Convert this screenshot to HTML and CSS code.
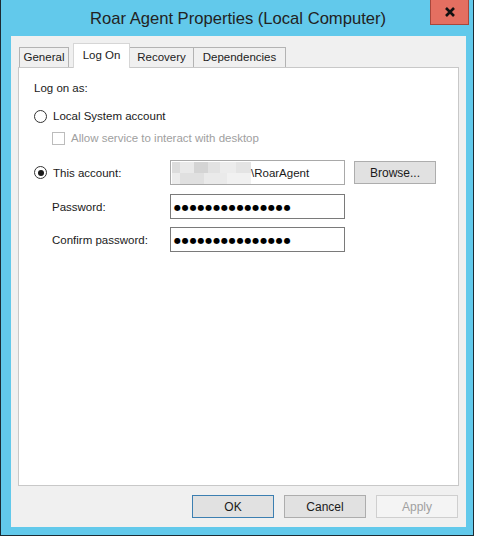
FILE: index.html
```html
<!DOCTYPE html>
<html lang="en">
<head>
  <meta charset="UTF-8">
  <title>Roar Agent Properties (Local Computer)</title>
  <link rel="stylesheet" href="styles.css">
</head>
<body>
  <div class="window">
    <div class="titlebar">
      <span class="title">Roar Agent Properties (Local Computer)</span>
      <div class="close">
        <svg width="12" height="10" viewBox="0 0 12 10">
          <path d="M2 1 L10 9 M10 1 L2 9" stroke="#111" stroke-width="2.6" fill="none"/>
        </svg>
      </div>
    </div>

    <div class="client">
      <div class="tabs">
        <div class="tab tab-general">General</div>
        <div class="tab tab-logon active">Log On</div>
        <div class="tab tab-recovery">Recovery</div>
        <div class="tab tab-deps">Dependencies</div>
      </div>

      <div class="panel">
        <div class="heading">Log on as:</div>

        <div class="option row-local">
          <span class="radio"></span>
          <span>Local System account</span>
        </div>

        <div class="option row-check">
          <span class="check"></span>
          <span class="disabled">Allow service to interact with desktop</span>
        </div>

        <div class="field-row row-account">
          <div class="field-label">
            <span class="radio checked"></span>
            <span>This account:</span>
          </div>
          <div class="textbox account">
            <span class="redacted">
              <span></span><span></span><span></span><span></span><span></span><span></span>
            </span>
            <span>\RoarAgent</span>
          </div>
          <button class="btn browse">Browse...</button>
        </div>

        <div class="field-row row-pass">
          <div class="field-label sub">Password:</div>
          <div class="textbox secret">●●●●●●●●●●●●●●●</div>
        </div>

        <div class="field-row row-confirm">
          <div class="field-label sub">Confirm password:</div>
          <div class="textbox secret">●●●●●●●●●●●●●●●</div>
        </div>
      </div>

      <div class="actions">
        <button class="btn default">OK</button>
        <button class="btn">Cancel</button>
        <button class="btn" disabled>Apply</button>
      </div>
    </div>
  </div>
</body>
</html>
```

FILE: styles.css
```css
body {
  margin: 0;
  background: #fff;
  font-family: "Liberation Sans", Arial, sans-serif;
  font-size: 11.5px;
  color: #1a1a1a;
}

.window {
  width: 472px;
  height: 535px;
  display: flex;
  flex-direction: column;
  background: #62c9eb;
  border-left: 1px solid #1c2b33;
  border-right: 1px solid #1c2b33;
  border-bottom: 1px solid #1c2b33;
}

.titlebar {
  position: relative;
  height: 36px;
  display: flex;
  align-items: center;
  justify-content: center;
}
.title {
  font-size: 16.6px;
  color: #222;
  padding-top: 1px;
  margin-left: 2px;
}
.close {
  position: absolute;
  top: -1px;
  right: 4px;
  width: 37px;
  height: 24px;
  background: #e46f61;
  border: 1px solid #a8473c;
  display: flex;
  align-items: center;
  justify-content: center;
}

.client {
  flex: 1;
  margin: 0 7px 8px 10px;
  background: #f0f0f0;
  padding: 7px 7px 0 7px;
  display: flex;
  flex-direction: column;
}

/* tabs */
.tabs {
  display: flex;
  align-items: flex-end;
  height: 24px;
  padding-left: 1px;
  position: relative;
  z-index: 1;
}
.tab {
  height: 20px;
  box-sizing: border-box;
  border: 1px solid #b3b3b3;
  border-bottom: none;
  background: #f0f0f0;
  display: flex;
  align-items: center;
  justify-content: center;
  color: #222;
  padding-bottom: 1px;
}
.tab-general { width: 50px; margin-right: 4px; }
.tab-logon { width: 57px; }
.tab-recovery { width: 64px; border-left: none; }
.tab-deps { width: 92px; border-left: none; }
.tab.active {
  height: 25px;
  margin-bottom: -1px;
  background: #fff;
  border-color: #d6d6d6;
  padding-top: 0;
  padding-bottom: 3px;
}

.panel {
  height: 419px;
  box-sizing: border-box;
  background: #fff;
  border: 1px solid #c8c8c8;
  padding: 12px 0 0 15px;
}

.heading {
  height: 16px;
  line-height: 16px;
}

.option {
  display: flex;
  align-items: center;
  height: 16px;
}
.row-local { margin-top: 12px; }
.row-check { margin-top: 6px; padding-left: 18px; }

.radio {
  width: 11px;
  height: 11px;
  border: 1px solid #333;
  border-radius: 50%;
  margin-right: 6px;
  flex: none;
  background: #fff;
  display: flex;
  align-items: center;
  justify-content: center;
}
.radio.checked::after {
  content: "";
  width: 6px;
  height: 6px;
  border-radius: 50%;
  background: #1a1a1a;
}
.check {
  width: 11px;
  height: 11px;
  border: 1px solid #bcbcbc;
  margin-right: 6px;
  flex: none;
}
.disabled { color: #a0a0a0; }

.field-row {
  display: flex;
  align-items: center;
}
.row-account { margin-top: 14px; }
.row-pass { margin-top: 9px; }
.row-confirm { margin-top: 8px; }

.field-label {
  width: 136px;
  flex: none;
  display: flex;
  align-items: center;
}
.field-label.sub { padding-left: 18px; box-sizing: border-box; }

.textbox {
  width: 175px;
  height: 25px;
  box-sizing: border-box;
  border: 1px solid #7a7a7a;
  background: #fff;
  display: flex;
  align-items: center;
  padding-left: 2px;
}
.account {
  border-color: #a9a9a9;
  padding-left: 1px;
}
.redacted {
  display: grid;
  grid-template-columns: 8px 14px 14px 12px 16px 15px;
  grid-template-rows: 11px 11px;
  width: 79px;
  height: 22px;
}
.redacted span:nth-child(1) { background: #dcdcdc; }
.redacted span:nth-child(2) { background: #e9e9e9; }
.redacted span:nth-child(3) { background: #d4d4d4; }
.redacted span:nth-child(4) { background: #e2e2e2; }
.redacted span:nth-child(5) { background: #ececec; }
.redacted span:nth-child(6) { background: #e4e4e4; }
.redacted::after {
  content: "";
  grid-column: 1 / 7;
  background: linear-gradient(90deg, #ececec 0 10%, #e0e0e0 10% 40%, #eaeaea 40% 70%, #f1f1f1 70%);
}

.secret {
  font-family: "DejaVu Sans", sans-serif;
  font-size: 8px;
  letter-spacing: 0.85px;
  color: #000;
  padding-left: 3px;
  padding-top: 1px;
}

.btn {
  width: 82px;
  height: 23px;
  box-sizing: border-box;
  border: 1px solid #adadad;
  background: #e1e1e1;
  font-family: inherit;
  font-size: 12px;
  color: #1a1a1a;
  padding: 0;
}
.browse {
  margin-left: 9px;
}
.btn.default {
  border-color: #3c7fb1;
}
.btn:disabled {
  border-color: #cfcfcf;
  background: #f4f4f4;
  color: #a0a0a0;
}

.actions {
  display: flex;
  justify-content: flex-end;
  gap: 10px;
  margin-top: 9px;
  padding-right: 1px;
}
.actions .btn { height: 23px; }
```
